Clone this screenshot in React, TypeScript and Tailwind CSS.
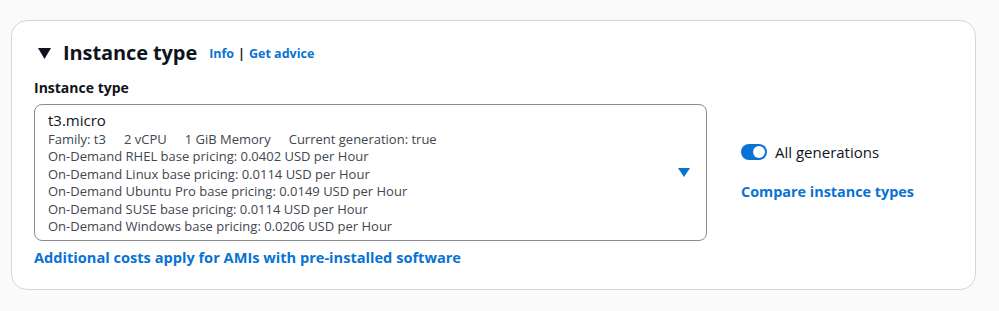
const pricing = [
  "On-Demand RHEL base pricing: 0.0402 USD per Hour",
  "On-Demand Linux base pricing: 0.0114 USD per Hour",
  "On-Demand Ubuntu Pro base pricing: 0.0149 USD per Hour",
  "On-Demand SUSE base pricing: 0.0114 USD per Hour",
  "On-Demand Windows base pricing: 0.0206 USD per Hour",
];

const App = () => {
  return (
    <div
      className="min-h-[311px] bg-[#fafafa] px-[11px] pt-[20px] pb-[20px] text-[#0f141a]"
      style={{ fontFamily: '"Open Sans", "Noto Sans", Arial, sans-serif' }}
    >
      <div className="w-[965px] rounded-[16px] border border-[#d6d6d6] bg-white pl-[22px] pr-[22px] pt-[18px] pb-[22px]">
        {/* Header */}
        <div className="flex items-center h-[28px]">
          <svg width="13" height="12" viewBox="0 0 13 12" className="ml-[4px] mr-[12px]">
            <polygon points="0,1 13,1 6.5,12" fill="#0f141a" />
          </svg>
          <h2 className="text-[20px] font-bold tracking-[-0.1px]">Instance type</h2>
          <div className="ml-[12px] mt-[3px] flex items-center text-[12.5px] font-bold text-[#0972d3]">
            <span>Info</span>
            <span className="mx-[4px] text-[#0f141a]">|</span>
            <span>Get advice</span>
          </div>
        </div>

        {/* Field */}
        <div className="mt-[11px] text-[14px] font-bold leading-[20px]">Instance type</div>
        <div className="mt-[6px] flex items-start gap-[34px]">
          <div>
            <div className="relative w-[673px] h-[137px] rounded-[8px] border border-[#8c8c94] pl-[13px] pt-[5px]">
              <div className="text-[15px] leading-[21px]">t3.micro</div>
              <div className="flex text-[13px] leading-[17px] text-[#424650]">
                <span>Family: t3</span>
                <span className="ml-[18px]">2 vCPU</span>
                <span className="ml-[18px]">1 GiB Memory</span>
                <span className="ml-[18px]">Current generation: true</span>
              </div>
              {pricing.map((p, i) => (
                <div key={i} className="text-[13px] leading-[17.5px] text-[#424650]">
                  {p}
                </div>
              ))}
              <svg
                width="12"
                height="9"
                viewBox="0 0 12 9"
                className="absolute right-[16px] top-[63px]"
              >
                <polygon points="0,0 12,0 6,9" fill="#0972d3" />
              </svg>
            </div>
            <div className="mt-[6px] text-[14.6px] font-bold leading-[20px] text-[#0972d3]">
              Additional costs apply for AMIs with pre-installed software
            </div>
          </div>

          {/* Right column */}
          <div className="pt-[38px]">
            <div className="flex items-center">
              <div className="relative w-[26px] h-[16px] rounded-full bg-[#0972d3]">
                <div className="absolute right-[2px] top-[2px] w-[12px] h-[12px] rounded-full bg-white" />
              </div>
              <span className="ml-[8px] text-[15px] leading-[20px]">All generations</span>
            </div>
            <div className="mt-[20px] text-[14.4px] font-bold leading-[20px] text-[#0972d3]">
              Compare instance types
            </div>
          </div>
        </div>
      </div>
    </div>
  );
};

export default App;
